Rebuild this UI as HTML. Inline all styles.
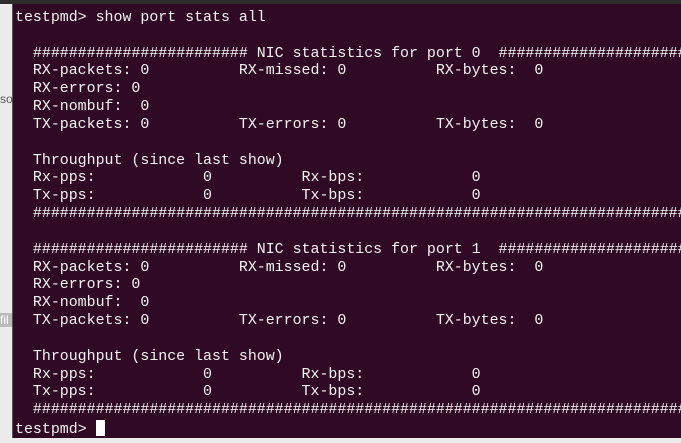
<!DOCTYPE html>
<html><head><style>
html,body{margin:0;padding:0;width:681px;height:443px;overflow:hidden;background:#ececec;position:relative;}
.top{position:absolute;left:0;top:0;width:681px;height:4px;background:#2d2d2d;}
.term{position:absolute;left:12px;top:4px;width:669px;height:434px;background:#300a24;border-left:1px solid #555;overflow:hidden;}
pre{margin:0;position:absolute;left:2px;top:6px;font-family:"Liberation Mono",monospace;font-size:14.93px;line-height:17.83px;color:#f2f2f2;white-space:pre;}
.cur{display:inline-block;width:9px;height:16px;background:#fff;vertical-align:-3px;}
.side{position:absolute;left:0;font-family:"Liberation Sans",sans-serif;font-size:12px;color:#555;}
</style></head><body>
<div class="top"></div>
<div class="side" style="top:92px;">so</div>
<div class="side" style="top:313px;background:#bbb;color:#fff;width:12px;overflow:hidden;">fil</div>
<div class="term"><pre>testpmd&gt; show port stats all

  ######################## NIC statistics for port 0  ########################
  RX-packets: 0          RX-missed: 0          RX-bytes:  0
  RX-errors: 0
  RX-nombuf:  0
  TX-packets: 0          TX-errors: 0          TX-bytes:  0

  Throughput (since last show)
  Rx-pps:            0          Rx-bps:            0
  Tx-pps:            0          Tx-bps:            0
  ############################################################################

  ######################## NIC statistics for port 1  ########################
  RX-packets: 0          RX-missed: 0          RX-bytes:  0
  RX-errors: 0
  RX-nombuf:  0
  TX-packets: 0          TX-errors: 0          TX-bytes:  0

  Throughput (since last show)
  Rx-pps:            0          Rx-bps:            0
  Tx-pps:            0          Tx-bps:            0
  ############################################################################
testpmd&gt; <span class="cur"></span></pre></div>
</body></html>
